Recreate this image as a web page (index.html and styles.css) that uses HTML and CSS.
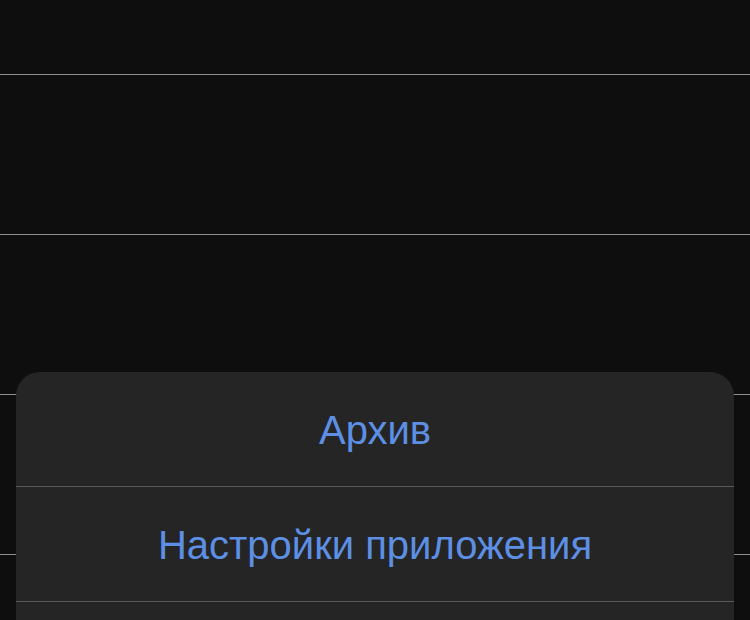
FILE: index.html
```html
<!DOCTYPE html>
<html lang="ru">
<head>
<meta charset="utf-8">
<link rel="stylesheet" href="styles.css">
</head>
<body>
<div class="list">
  <div class="row row-first"></div>
  <div class="row"></div>
  <div class="row"></div>
  <div class="row"></div>
</div>
<div class="sheet">
  <div class="sheet-item">Архив</div>
  <div class="sheet-item">Настройки приложения</div>
  <div class="sheet-item"></div>
</div>
</body>
</html>
```
FILE: styles.css
```css
html, body {
  margin: 0;
  padding: 0;
  background: #0e0e0e;
  width: 750px;
  height: 620px;
  overflow: hidden;
  font-family: "Liberation Sans", Arial, sans-serif;
}
.list {
  display: flex;
  flex-direction: column;
}
.row {
  height: 159px;
  border-bottom: 1px solid #8f8f8f;
}
.row-first {
  height: 73px;
  margin-top: 1px;
}
.sheet {
  position: absolute;
  left: 16px;
  right: 16px;
  top: 372px;
  bottom: 0;
  overflow: hidden;
  background: #252525;
  border-radius: 24px 24px 0 0;
  display: flex;
  flex-direction: column;
}
.sheet-item {
  flex: none;
  height: 115px;
  border-bottom: 1px solid #595959;
  display: flex;
  align-items: center;
  justify-content: center;
  color: #5d8fe4;
  font-size: 40px;
  padding-top: 2px;
  box-sizing: border-box;
}
```
